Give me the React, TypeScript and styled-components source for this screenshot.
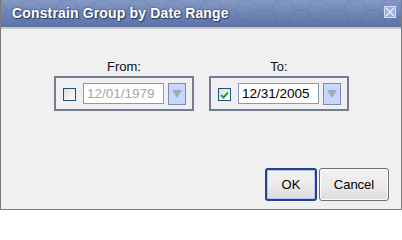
import React from 'react';
import styled, { createGlobalStyle } from 'styled-components';

const GlobalStyle = createGlobalStyle`
  html, body {
    margin: 0;
    padding: 0;
    background: #ffffff;
  }
  * {
    box-sizing: border-box;
  }
`;

const hexPattern = `url("data:image/svg+xml;utf8,${encodeURIComponent(
  `<svg xmlns='http://www.w3.org/2000/svg' width='36' height='21'><path d='M0 0 L6 10.5 L0 21 M6 10.5 L18 10.5 L24 0 M24 21 L18 10.5 M24 0 L36 0 M24 21 L36 21' fill='none' stroke='rgba(60,80,130,0.22)' stroke-width='1'/></svg>`
)}")`;

const Window = styled.div`
  width: 402px;
  height: 210px;
  display: flex;
  flex-direction: column;
  border: 1px solid #7c7c7c;
  border-top: none;
  background: #f0f0f0;
  font-family: 'Liberation Sans', Arial, sans-serif;
`;

const TitleBar = styled.div`
  height: 29px;
  flex: none;
  display: flex;
  align-items: center;
  justify-content: space-between;
  padding: 0 5px 1px 11px;
  background-image: ${hexPattern},
    linear-gradient(to bottom, #8499c4 0%, #6f85b6 50%, #5d73a7 100%);
  background-position: 180px 0, 0 0;
  border-bottom: 2px solid #c9c9c9;
`;

const Title = styled.span`
  color: #ffffff;
  font-size: 14px;
  font-weight: bold;
  letter-spacing: 0.15px;
  text-shadow: 0 0 2px #2b3b66, 1px 1px 1px #2b3b66;
`;

const CloseButton = styled.button`
  width: 12px;
  height: 12px;
  padding: 0;
  margin-top: -2px;
  border: 1px solid #d4dcf6;
  background: #9aaedc;
  display: flex;
  align-items: center;
  justify-content: center;
`;

const Body = styled.div`
  flex: 1;
  display: flex;
  flex-direction: column;
  padding: 30px 12px 8px;
`;

const Groups = styled.div`
  display: flex;
  justify-content: center;
  gap: 15px;
  padding-left: 1px;
`;

const Group = styled.div`
  display: flex;
  flex-direction: column;
  align-items: center;
`;

const GroupLabel = styled.div`
  font-size: 13px;
  line-height: 15px;
  color: #111;
  margin-bottom: 2px;
`;

const GroupBox = styled.div`
  width: 140px;
  height: 35px;
  display: flex;
  align-items: center;
  padding: 0 6px 0 7px;
  border: 2px solid #737d8f;
`;

const Check = styled.span`
  width: 13px;
  height: 13px;
  flex: none;
  margin: 2px 7px 0 0;
  border: 1px solid #1c5180;
  background: linear-gradient(135deg, #dcdcd6 0%, #f6f6f4 70%, #ffffff 100%);
  display: flex;
  align-items: center;
  justify-content: center;
`;

const DateInput = styled.input<{ $disabled?: boolean }>`
  width: 81px;
  height: 21px;
  padding: 0 3px;
  border: 1px solid #7f9db9;
  background: #ffffff;
  font-family: 'Liberation Sans', Arial, sans-serif;
  font-size: 13.5px;
  color: ${(p) => (p.$disabled ? '#a6a6a6' : '#000000')};
  outline: none;
`;

const DropButton = styled.span`
  width: 18px;
  height: 22px;
  flex: none;
  margin-left: 4px;
  border: 1px solid #7c8ab4;
  background: #c7d6fb;
  display: flex;
  align-items: center;
  justify-content: center;
`;

const Actions = styled.div`
  margin-top: auto;
  display: flex;
  justify-content: flex-end;
  gap: 2px;
`;

const Button = styled.button<{ $primary?: boolean }>`
  height: 33px;
  padding: 0;
  font-family: 'Liberation Sans', Arial, sans-serif;
  font-size: 13px;
  color: #000;
  border-radius: 3px;
  background: linear-gradient(to bottom, #f2f2f2 0%, #ebebeb 50%, #dddddd 100%);
  border: ${(p) => (p.$primary ? '2px solid #24418f' : '1px solid #707070')};
  box-shadow: inset 0 0 0 1px ${(p) => (p.$primary ? '#b9c6e6' : '#fcfcfc')};
`;

const OkButton = styled(Button)`
  width: 52px;
`;

const CancelButton = styled(Button)`
  width: 70px;
`;

const CheckMark = () => (
  <svg width="9" height="8" viewBox="0 0 9 8">
    <path d="M1 4 L3.5 6.5 L8 1.5" fill="none" stroke="#22a02a" strokeWidth="2" />
  </svg>
);

const DownArrow = () => (
  <svg width="10" height="8" viewBox="0 0 10 8">
    <path d="M0 0 H10 L5 8 Z" fill="#a3aab7" />
  </svg>
);

const CloseIcon = () => (
  <svg width="10" height="10" viewBox="0 0 10 10">
    <path d="M1 1 L9 9 M9 1 L1 9" stroke="#eef1fc" strokeWidth="1.2" />
  </svg>
);

type DateGroupProps = {
  label: string;
  value: string;
  checked: boolean;
};

const DateGroup = ({ label, value, checked }: DateGroupProps) => (
  <Group>
    <GroupLabel>{label}</GroupLabel>
    <GroupBox>
      <Check>{checked && <CheckMark />}</Check>
      <DateInput value={value} readOnly $disabled={!checked} />
      <DropButton>
        <DownArrow />
      </DropButton>
    </GroupBox>
  </Group>
);

export default function App() {
  return (
    <>
      <GlobalStyle />
      <Window>
        <TitleBar>
          <Title>Constrain Group by Date Range</Title>
          <CloseButton>
            <CloseIcon />
          </CloseButton>
        </TitleBar>
        <Body>
          <Groups>
            <DateGroup label="From:" value="12/01/1979" checked={false} />
            <DateGroup label="To:" value="12/31/2005" checked={true} />
          </Groups>
          <Actions>
            <OkButton $primary>OK</OkButton>
            <CancelButton>Cancel</CancelButton>
          </Actions>
        </Body>
      </Window>
    </>
  );
}
